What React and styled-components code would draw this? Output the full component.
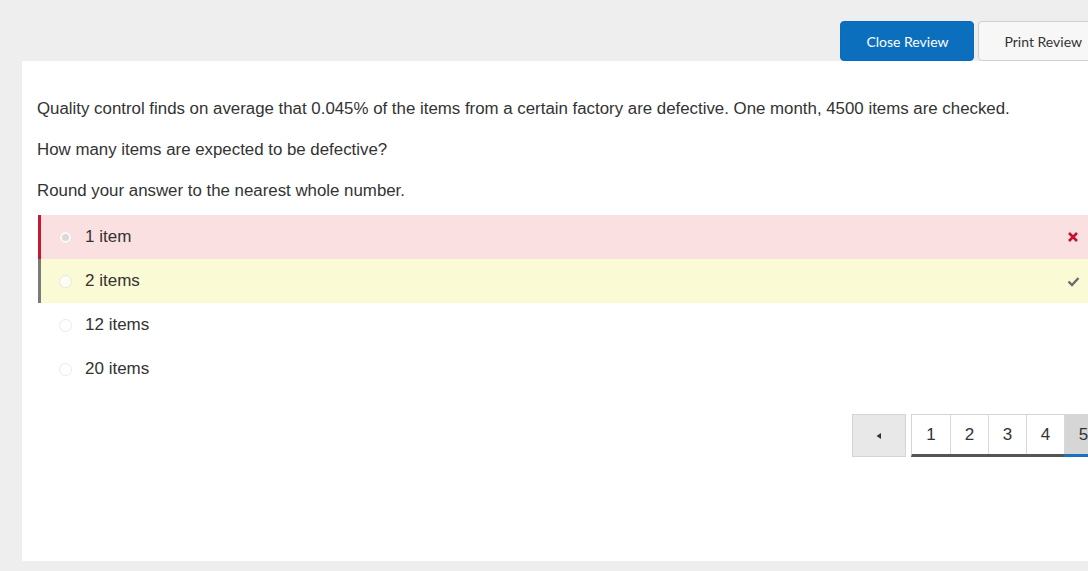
import React from "react";
import styled, { createGlobalStyle } from "styled-components";

const GlobalStyle = createGlobalStyle`
  html, body {
    margin: 0;
    padding: 0;
    background: #eeeeee;
    overflow: hidden;
  }
  body {
    font-family: "Liberation Sans", Arial, sans-serif;
    color: #333;
  }
`;

const Page = styled.div`
  width: 1110px;
  height: 571px;
`;

const Toolbar = styled.div`
  height: 61px;
  box-sizing: border-box;
  padding: 21px 2px 0 0;
  display: flex;
  justify-content: flex-end;
  align-items: flex-start;
  gap: 4px;
`;

const ToolButton = styled.button`
  height: 40px;
  box-sizing: border-box;
  padding: 0 25px;
  border-radius: 4px;
  font-family: Lato, "Liberation Sans", sans-serif;
  font-size: 14px;
  cursor: pointer;
  border: 1px solid ${(p) => (p.$primary ? "#0a6abb" : "#cfcfcf")};
  background: ${(p) => (p.$primary ? "#0b6fbe" : "#f7f7f7")};
  color: ${(p) => (p.$primary ? "#fff" : "#333")};
`;

const Panel = styled.div`
  margin-left: 22px;
  height: 500px;
  box-sizing: border-box;
  background: #fff;
  padding: 36px 7px 0 15px;
`;

const Para = styled.p`
  margin: 0 0 17px;
  font-size: 16.85px;
  line-height: 24px;
  color: #333;
`;

const Options = styled.div`
  margin: -5px 0 0 1px;
`;

const Option = styled.div`
  height: 44px;
  box-sizing: border-box;
  display: flex;
  align-items: center;
  padding: 0 10px 0 18px;
  border-left: 3px solid ${(p) => p.$edge || "transparent"};
  background: ${(p) => p.$bg || "transparent"};
`;

const Radio = styled.span`
  width: 13px;
  height: 13px;
  box-sizing: border-box;
  border-radius: 50%;
  border: 1px solid #e2e2e2;
  background: #fff;
  display: flex;
  align-items: center;
  justify-content: center;
  opacity: 0.75;
  &::after {
    content: "";
    width: 7px;
    height: 7px;
    border-radius: 50%;
    background: ${(p) => (p.$checked ? "#d6d6d6" : "transparent")};
  }
`;

const Label = styled.span`
  margin-left: 13px;
  font-size: 17px;
  color: #333;
  flex: 1;
`;

const Mark = styled.span`
  width: 40px;
  display: flex;
  justify-content: center;
`;

const Pager = styled.div`
  margin-top: 23px;
  display: flex;
  justify-content: flex-end;
  align-items: flex-start;
  gap: 5px;
`;

const PrevButton = styled.button`
  width: 54px;
  height: 43px;
  box-sizing: border-box;
  background: #e8e8e8;
  border: 1px solid #d4d4d4;
  display: flex;
  align-items: center;
  justify-content: center;
  padding: 0;
`;

const Pages = styled.div`
  display: flex;
  border: 1px solid #d4d4d4;
  border-bottom: 3px solid #555;
`;

const PageNum = styled.span`
  width: 38px;
  height: 39px;
  box-sizing: border-box;
  display: flex;
  align-items: center;
  justify-content: center;
  font-size: 17px;
  color: #333;
  border-left: 1px solid #d8d8d8;
  position: relative;
  background: ${(p) => (p.$active ? "#d6d6d6" : "#fff")};
  &:first-child {
    border-left: none;
  }
  ${(p) =>
    p.$active &&
    `&::after {
      content: "";
      position: absolute;
      left: -1px;
      right: -1px;
      bottom: -3px;
      height: 3px;
      background: #1d6fc0;
    }`}
`;

const Cross = () => (
  <svg width="12" height="12" viewBox="0 0 12 12">
    <path d="M2 2 L10 10 M10 2 L2 10" stroke="#c8102e" strokeWidth="2.6" />
  </svg>
);

const Check = () => (
  <svg width="13" height="11" viewBox="0 0 13 11">
    <path d="M1.5 5.5 L5 9 L11.5 2" stroke="#6b6b6b" strokeWidth="2.4" fill="none" />
  </svg>
);

const answers = [
  { text: "1 item", bg: "#fae0e0", edge: "#c41733", checked: true, mark: <Cross /> },
  { text: "2 items", bg: "#fafad4", edge: "#7a7a7a", mark: <Check /> },
  { text: "12 items" },
  { text: "20 items" },
];

export default function App() {
  return (
    <Page>
      <GlobalStyle />
      <Toolbar>
        <ToolButton $primary>Close Review</ToolButton>
        <ToolButton>Print Review</ToolButton>
      </Toolbar>
      <Panel>
        <Para>
          Quality control finds on average that 0.045% of the items from a certain factory are
          defective. One month, 4500 items are checked.
        </Para>
        <Para>How many items are expected to be defective?</Para>
        <Para>Round your answer to the nearest whole number.</Para>
        <Options>
          {answers.map((a) => (
            <Option key={a.text} $bg={a.bg} $edge={a.edge}>
              <Radio $checked={a.checked} />
              <Label>{a.text}</Label>
              <Mark>{a.mark}</Mark>
            </Option>
          ))}
        </Options>
        <Pager>
          <PrevButton>
            <svg width="8" height="8" viewBox="0 0 8 8">
              <path d="M6 1 L1.5 4 L6 7 Z" fill="#333" />
            </svg>
          </PrevButton>
          <Pages>
            {[1, 2, 3, 4, 5].map((n) => (
              <PageNum key={n} $active={n === 5}>
                {n}
              </PageNum>
            ))}
          </Pages>
        </Pager>
      </Panel>
    </Page>
  );
}
